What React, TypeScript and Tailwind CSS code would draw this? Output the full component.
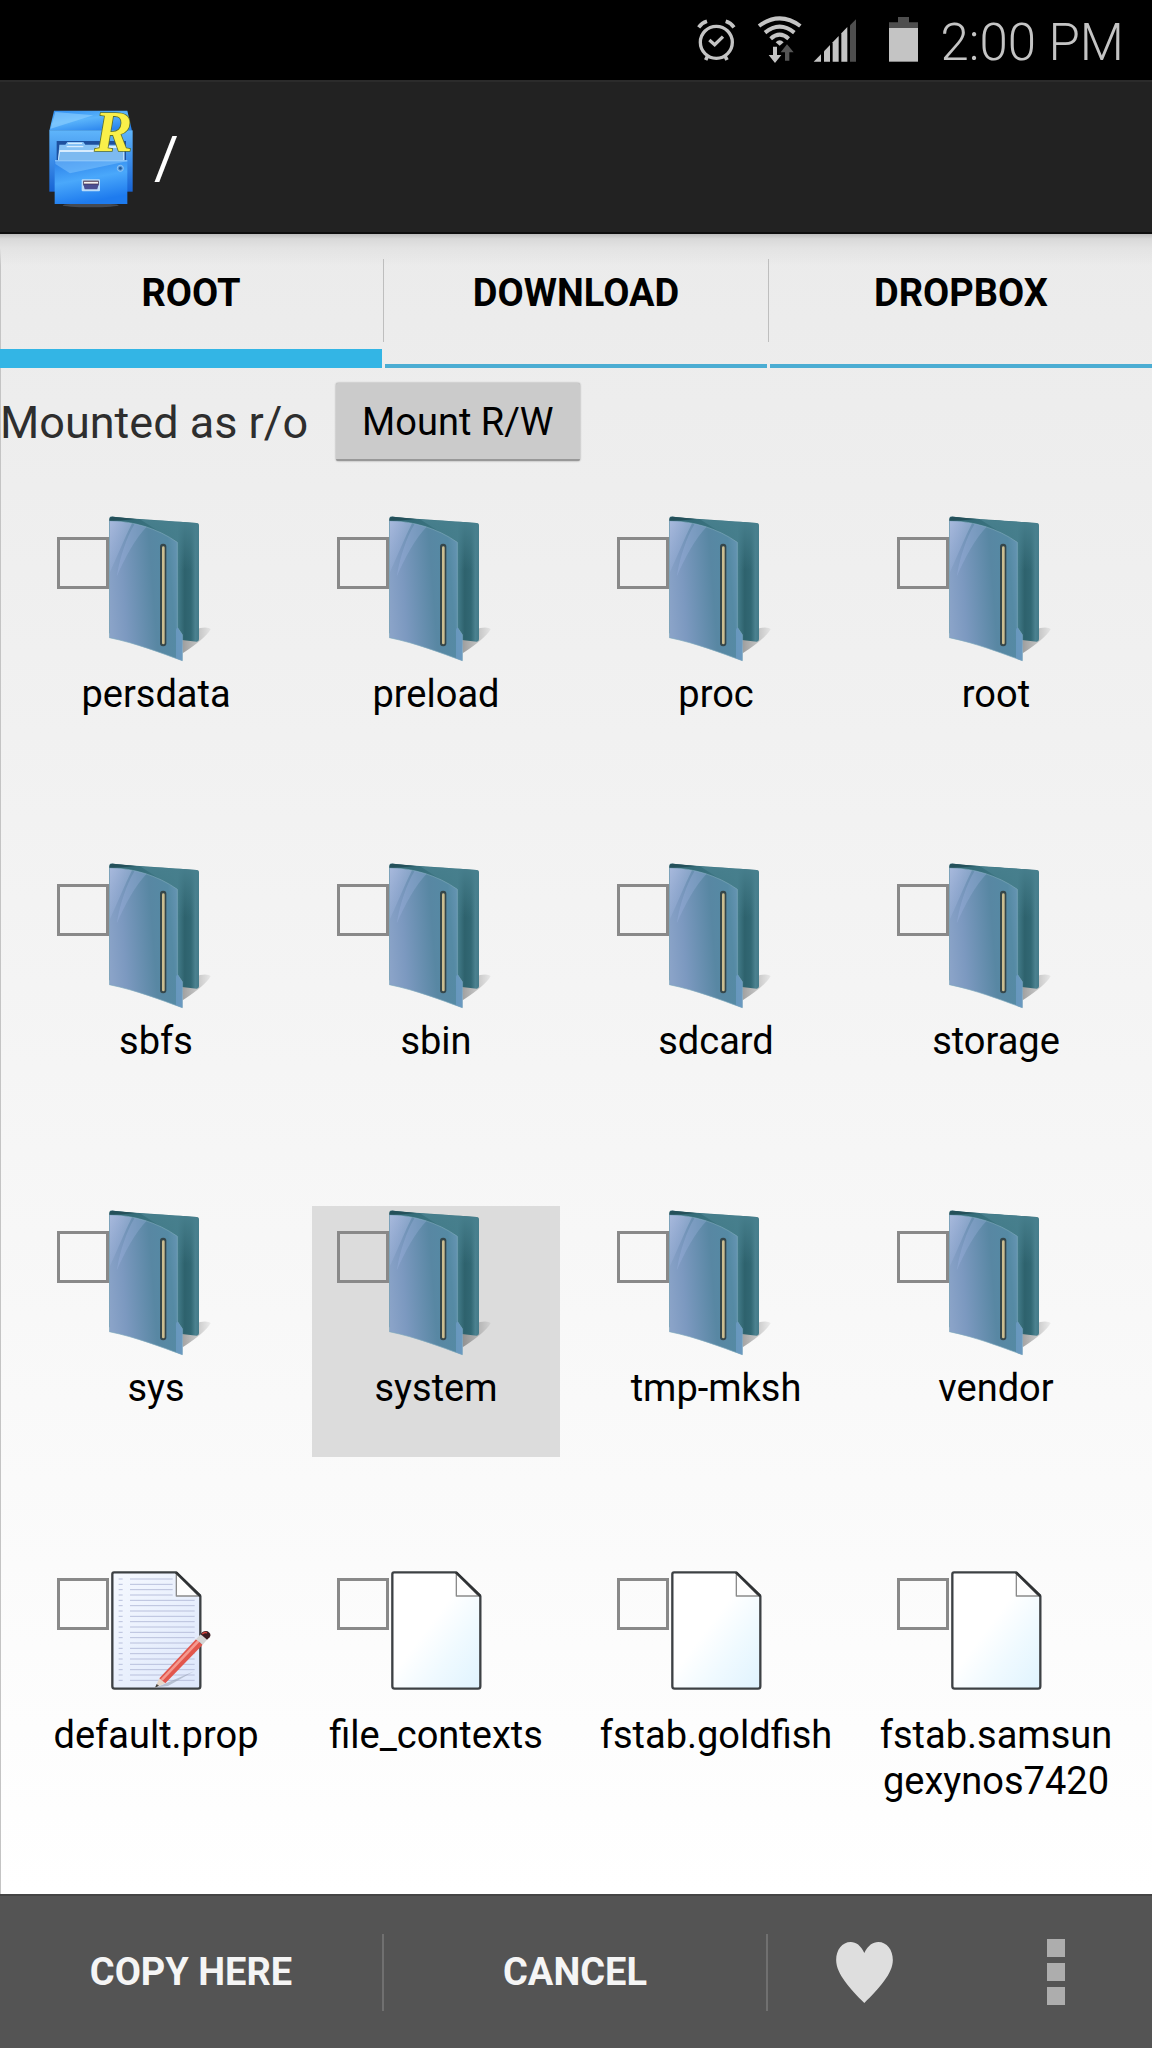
import React, { useState } from 'react';

type EntryKind = 'folder' | 'text' | 'file';

interface Entry {
  name: string;
  kind: EntryKind;
}

const tabs = ['ROOT', 'DOWNLOAD', 'DROPBOX'];

const entries: Entry[] = [
  { name: 'persdata', kind: 'folder' },
  { name: 'preload', kind: 'folder' },
  { name: 'proc', kind: 'folder' },
  { name: 'root', kind: 'folder' },
  { name: 'sbfs', kind: 'folder' },
  { name: 'sbin', kind: 'folder' },
  { name: 'sdcard', kind: 'folder' },
  { name: 'storage', kind: 'folder' },
  { name: 'sys', kind: 'folder' },
  { name: 'system', kind: 'folder' },
  { name: 'tmp-mksh', kind: 'folder' },
  { name: 'vendor', kind: 'folder' },
  { name: 'default.prop', kind: 'text' },
  { name: 'file_contexts', kind: 'file' },
  { name: 'fstab.goldfish', kind: 'file' },
  { name: 'fstab.samsungexynos7420', kind: 'file' },
];

// Gradients shared by all the folder and file icons
const IconDefs: React.FC = () => (
  <svg className="absolute h-0 w-0" aria-hidden="true">
    <defs>
      <linearGradient id="folderFront" x1="0" y1="0.6" x2="1" y2="0.45">
        <stop offset="0" stopColor="#8aa3c8" />
        <stop offset="0.2" stopColor="#7c99c0" />
        <stop offset="0.6" stopColor="#5887a3" />
        <stop offset="0.85" stopColor="#558aa4" />
        <stop offset="1" stopColor="#6896b5" />
      </linearGradient>
      <linearGradient id="folderBack" x1="0" y1="0" x2="1" y2="0">
        <stop offset="0" stopColor="#2d6470" />
        <stop offset="0.76" stopColor="#437c8a" />
        <stop offset="0.84" stopColor="#2e626d" />
        <stop offset="0.91" stopColor="#326874" />
        <stop offset="0.96" stopColor="#4b818f" />
        <stop offset="1" stopColor="#437a89" />
      </linearGradient>
      <linearGradient id="folderBackTop" x1="0" y1="0" x2="0" y2="1">
        <stop offset="0" stopColor="#477f8d" />
        <stop offset="1" stopColor="#477f8d" stopOpacity="0" />
      </linearGradient>
      <linearGradient id="folderShine" x1="0" y1="0" x2="0.5" y2="1">
        <stop offset="0" stopColor="#c5cff0" stopOpacity="0.55" />
        <stop offset="1" stopColor="#a9bce6" stopOpacity="0.1" />
      </linearGradient>
      <linearGradient id="folderShadow" x1="0" y1="0" x2="1" y2="0">
        <stop offset="0" stopColor="#000" stopOpacity="0.35" />
        <stop offset="1" stopColor="#000" stopOpacity="0.05" />
      </linearGradient>
      <linearGradient id="paper" x1="0.2" y1="0.2" x2="1" y2="1">
        <stop offset="0.3" stopColor="#ffffff" />
        <stop offset="0.6" stopColor="#f0faff" />
        <stop offset="1" stopColor="#dff3fe" />
      </linearGradient>
      <linearGradient id="textPaper" x1="0" y1="0" x2="1" y2="1">
        <stop offset="0" stopColor="#f6f9ff" />
        <stop offset="1" stopColor="#dde7fb" />
      </linearGradient>
    </defs>
  </svg>
);

const FolderIcon: React.FC = () => (
  <svg viewBox="207 36 360 474" className="h-[158px] w-[120px]" aria-hidden="true">
    <path d="M426 408 L480 384 Q506 380 512 388 Q496 416 428 460 Z" fill="url(#folderShadow)" />
    <path d="M208 54 Q210 49 220 50 C270 56 390 62 470 69 Q477 70 477 77 V418 Q477 425 470 425 L426 420 L208 400 Z" fill="url(#folderBack)" />
    <path d="M300 58 C350 62 420 66 470 69 Q477 70 477 77 V210 H412 V130 Z" fill="url(#folderBackTop)" />
    <path d="M208 62 C280 64 350 84 412 127 V382 L427 404 V482 C360 458 290 430 208 413 Z" fill="url(#folderFront)" stroke="#7fa9bd" strokeWidth="2" />
    <path d="M210 64 C240 65 262 68 276 70 C256 110 236 160 210 216 Z" fill="url(#folderShine)" />
    <path d="M284 71 L320 80 C286 116 256 170 230 230 C240 170 260 110 284 71 Z" fill="#a9bce8" opacity="0.28" />
    <path d="M412 382 L427 404 V482 L408 475 V388 Z" fill="#6f9dc8" opacity="0.7" />
    <path d="M208 60 Q210 49 220 50 L290 57 C262 58 240 64 208 62 Z" fill="#24505a" />
    <rect x="360" y="131" width="19" height="308" rx="9" fill="#34464a" />
    <rect x="366" y="139" width="8" height="294" rx="4" fill="#cbbd90" />
  </svg>
);

const FileIcon: React.FC<{ lined?: boolean }> = ({ lined }) => (
  <svg viewBox="207 -21 360 474" className="h-[158px] w-[120px]" aria-hidden="true">
    <path
      d="M222 37 H408 L481 108 V379 Q481 386 474 386 H224 Q217 386 217 379 V43 Q217 37 222 37 Z"
      fill={lined ? 'url(#textPaper)' : 'url(#paper)'}
      stroke="#3d4144"
      strokeWidth="7"
      strokeLinejoin="round"
    />
    {lined && (
      <g stroke="#b9c0dc" strokeWidth="3">
        {Array.from({ length: 20 }, (_, i) => 57 + i * 16).map((y) => (
          <path key={y} d={`M236 ${y} H248 M270 ${y} H${y < 112 ? 398 : 464}`} />
        ))}
      </g>
    )}
    <path d="M409 40 V108 H476 Z" fill="#fdfdfd" stroke="#8a8a8a" strokeWidth="4" strokeLinejoin="round" />
    <path d="M408 37 L481 108" stroke="#2f3234" strokeWidth="8" />
    {lined && (
      <g>
        <path d="M350 382 L462 334 L384 378 Z" fill="#9aa3b5" opacity="0.6" />
        <path d="M345 383 L358 355 L376 370 Z" fill="#e6d6c8" />
        <path d="M345 383 L350 372 L357 377 Z" fill="#444" />
        <path d="M358 355 L468 238 L488 254 L376 370 Z" fill="#e2564c" />
        <path d="M362 358 L472 241 L478 246 L368 362 Z" fill="#f59a90" />
        <path d="M468 238 L482 223 L501 239 L488 254 Z" fill="#d5d5d5" />
        <path d="M482 223 Q490 210 503 214 Q516 222 509 232 L501 239 Z" fill="#3c1c20" />
        <path d="M487 222 Q494 215 501 219" stroke="#d8433c" strokeWidth="4" fill="none" />
      </g>
    )}
  </svg>
);

const LogoIcon: React.FC = () => (
  <svg viewBox="54 54 264 312" className="h-[104px] w-[88px] overflow-visible" aria-hidden="true">
    <defs>
      <linearGradient id="cabTop" x1="0" y1="0" x2="0.6" y2="1">
        <stop offset="0" stopColor="#2f8cf0" />
        <stop offset="0.5" stopColor="#5ab4fb" />
        <stop offset="1" stopColor="#2c86ee" />
      </linearGradient>
      <linearGradient id="cabBody" x1="0" y1="0" x2="0" y2="1">
        <stop offset="0" stopColor="#5fb5fb" />
        <stop offset="1" stopColor="#1763d4" />
      </linearGradient>
      <linearGradient id="cabFront" x1="0" y1="0" x2="0.3" y2="1">
        <stop offset="0" stopColor="#2a7fe8" />
        <stop offset="0.5" stopColor="#4aa8fb" />
        <stop offset="1" stopColor="#1e7bee" />
      </linearGradient>
    </defs>
    <ellipse cx="182" cy="346" rx="84" ry="6" fill="#454a52" />
    <path d="M72 62 H292 L306 122 H58 Z" fill="url(#cabTop)" />
    <path d="M76 66 L190 76 L62 116 Z" fill="#8fd0ff" opacity="0.6" />
    <rect x="58" y="121" width="250" height="184" fill="url(#cabBody)" />
    <rect x="80" y="153" width="208" height="58" fill="#1d4f9e" />
    <path d="M88 164 H106 L112 156 H160 L166 164 H284 V211 H84 Z" fill="#86c1f5" />
    <path d="M88 180 H190 L204 168 H282 V211 H84 Z" fill="#d8ecfd" />
    <path d="M90 186 H194 L206 174 H280 V211 H86 Z" fill="#7dbaf0" />
    <path d="M114 160 H156 M110 170 H160" stroke="#e6f4ff" strokeWidth="3" />
    <rect x="74" y="212" width="218" height="130" fill="url(#cabFront)" />
    <path d="M76 214 H292 L120 250 L76 222 Z" fill="#8ccbff" opacity="0.45" />
    <rect x="75" y="211" width="217" height="3" fill="#a6d8ff" />
    <circle cx="271" cy="235" r="9" fill="#4d91d8" stroke="#93c9f7" strokeWidth="3" />
    <circle cx="271" cy="235" r="4" fill="#24578f" />
    <rect x="155" y="268" width="55" height="36" rx="3" fill="#b9dcfa" />
    <path d="M160 272 H206 V286 H160 Z" fill="#3a1f37" />
    <path d="M160 283 H206 L202 298 H164 Z" fill="#4a4f92" />
    <path d="M162 275 H204 V281 H162 Z" fill="#f3f3f3" />
    <text
      x="194"
      y="184"
      fontFamily="'Liberation Serif', serif"
      fontSize="168"
      fontStyle="italic"
      fontWeight="700"
      fill="#f9f04a"
      stroke="#5d6f2a"
      strokeWidth="5"
      paintOrder="stroke"
    >
      R
    </text>
  </svg>
);

const StatusBar: React.FC = () => (
  <div className="flex h-20 items-center justify-end bg-black pr-7 text-[#c4c4c4]">
    {/* Alarm */}
    <svg viewBox="60 0 120 240" className="mr-5 h-20 w-10" fill="none" stroke="#c4c4c4" strokeWidth="10" aria-hidden="true">
      <circle cx="118" cy="127" r="48" />
      <path d="M97 120 L113 134 L138 110" />
      <path d="M65 82 Q74 69 90 64 M146 64 Q162 69 171 82" strokeWidth="11" />
      <path d="M92 168 L86 180 M144 168 L150 180" strokeWidth="11" />
    </svg>
    {/* Wi-Fi */}
    <svg viewBox="240 0 138 240" className="mr-2.5 h-20 w-[46px]" fill="none" stroke="#c4c4c4" strokeWidth="12" aria-hidden="true">
      <path d="M246 78 Q308 32 370 78" />
      <path d="M264 98 Q308 62 352 98" />
      <path d="M281 116 Q308 92 335 116" />
      <path d="M296 127 Q308 115 320 127 L308 137 Z" fill="#c4c4c4" stroke="none" />
      <path d="M288 140 H300 V165 H313 L294 189 L275 165 H288 Z" fill="#c4c4c4" stroke="none" />
      <path d="M324 182 H337 V157 H350 L330 133 L311 157 H324 Z" fill="#555" stroke="none" />
    </svg>
    {/* Signal */}
    <svg viewBox="408 0 132 240" className="mr-8 h-20 w-11" fill="#c4c4c4" aria-hidden="true">
      <path d="M410 185 L432 163 V185 Z" />
      <path d="M441 185 V154 L459 135 V185 Z" />
      <path d="M467 185 V127 L485 108 V185 Z" />
      <path d="M493 185 V100 L511 81 V185 Z" />
      <path d="M519 185 V76 L537 58 V185 Z" fill="#4e4e4e" />
    </svg>
    {/* Battery */}
    <svg viewBox="636 0 87 240" className="mr-[22px] h-20 w-[29px]" aria-hidden="true">
      <path d="M636 67 H663 V51 H696 V67 H723 V84 H636 Z" fill="#4e4e4e" />
      <rect x="636" y="84" width="87" height="101" fill="#c4c4c4" />
    </svg>
    <span className="pt-1 text-[51px] leading-none font-light">2:00 PM</span>
  </div>
);

const App: React.FC = () => {
  const [activeTab, setActiveTab] = useState('ROOT');
  const [pressed, setPressed] = useState('system');

  return (
    <div className="flex min-h-screen flex-col bg-white font-['Roboto',sans-serif] text-[38px] leading-[46px] text-black">
      <IconDefs />
      <StatusBar />

      <header className="flex h-[154px] items-center gap-[18px] border-t-2 border-b-2 border-t-[#2b2b2b] border-b-[#0e0e0e] bg-[#222] pt-1.5 pl-12">
        <LogoIcon />
        <h1 className="pb-1 text-[60px] leading-none text-white">/</h1>
      </header>

      <main className="flex-1 bg-linear-to-b from-[#ebebeb] to-white pb-[89px] shadow-[inset_1px_0_0_#c4c4c4]">
        <nav className="flex h-[134px] bg-[linear-gradient(#bdbdbd,#d9d9d9_5px,#e3e3e3_14px,transparent_32px)]">
          {tabs.map((tab, index) => (
            <React.Fragment key={tab}>
              {index > 0 && <span className="mx-px mt-[25px] h-[83px] w-px bg-[#bebebe]" />}
              <button
                type="button"
                onClick={() => setActiveTab(tab)}
                className={`flex-1 pt-0.5 font-bold ${
                  activeTab === tab
                    ? 'border-b-[19px] border-[#33b5e5]'
                    : 'border-b-4 border-[#4badd3] pb-[15px]'
                }`}
              >
                {tab}
              </button>
            </React.Fragment>
          ))}
        </nav>

        <div className="flex items-center gap-7 pt-[15px]">
          <span className="pt-0.5 text-[45px] text-[#2e2e2e]">Mounted as r/o</span>
          <button
            type="button"
            className="h-[78px] rounded-xs border-b-2 border-[#989898] bg-[#cbcbcb] px-[26px] pt-0.5 shadow-[0_0_2px_#8a8a8a]"
          >
            Mount R/W
          </button>
        </div>

        <ul className="mt-[51px] grid grid-cols-4 gap-x-8 gap-y-24 px-8">
          {entries.map((entry) => (
            <li
              key={entry.name}
              onClick={() => setPressed(entry.name)}
              className={`min-h-[251px] ${pressed === entry.name ? 'bg-[#dcdcdc]' : ''}`}
            >
              <div className="flex pl-[25px]">
                <input
                  type="checkbox"
                  id={entry.name}
                  className="mt-[25px] h-[52px] w-[52px] appearance-none border-3 border-[#898989] checked:bg-[#33b5e5]"
                />
                {entry.kind === 'folder' ? <FolderIcon /> : <FileIcon lined={entry.kind === 'text'} />}
              </div>
              <label htmlFor={entry.name} className="block pt-px text-center break-all">
                {entry.name}
              </label>
            </li>
          ))}
        </ul>
      </main>

      <footer className="grid h-[154px] grid-cols-6 items-center border-t-2 border-[#444] bg-[#545454] font-bold text-[#f5f5f5]">
        <button type="button" className="col-span-2 h-[77px] border-r-2 border-[#707070]">
          COPY HERE
        </button>
        <button type="button" className="col-span-2 h-[77px] border-r-2 border-[#707070]">
          CANCEL
        </button>
        <button type="button" aria-label="Favorites" className="flex justify-center">
          <svg viewBox="0 0 171 184" className="h-[61px] w-[57px]" fill="#dedede" aria-hidden="true">
            <path d="M85 33 C74 10 60 0 44 0 C18 0 0 24 0 54 C0 96 42 140 85 184 C128 140 171 96 171 54 C171 24 153 0 127 0 C111 0 96 10 85 33 Z" />
          </svg>
        </button>
        <button type="button" aria-label="More options" className="flex flex-col items-center gap-1.5">
          <span className="h-[18px] w-[18px] bg-[#adadad]" />
          <span className="h-[18px] w-[18px] bg-[#adadad]" />
          <span className="h-[18px] w-[18px] bg-[#adadad]" />
        </button>
      </footer>
    </div>
  );
};

export default App;
